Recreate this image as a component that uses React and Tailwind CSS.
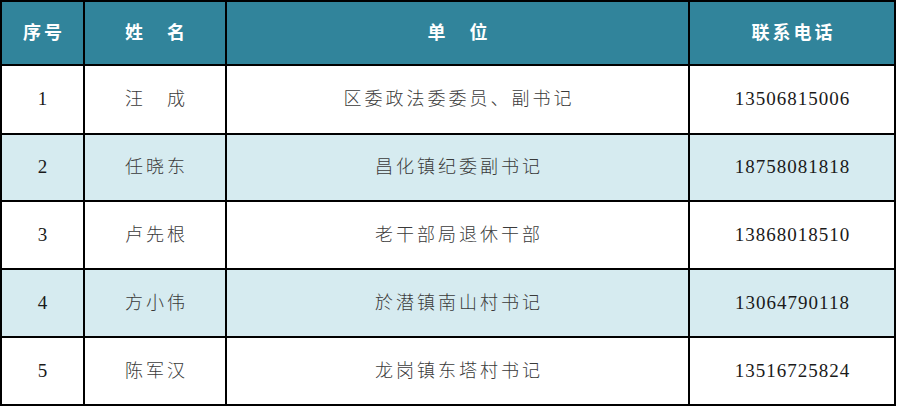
import React from "react";

const rows = [
  ["1", "汪　成", "区委政法委委员、副书记", "13506815006"],
  ["2", "任晓东", "昌化镇纪委副书记", "18758081818"],
  ["3", "卢先根", "老干部局退休干部", "13868018510"],
  ["4", "方小伟", "於潜镇南山村书记", "13064790118"],
  ["5", "陈军汉", "龙岗镇东塔村书记", "13516725824"],
];

const heights = ["h-[67px]", "h-[65px]", "h-[66px]", "h-[66px]", "h-[66px]"];

export default function App() {
  const font = { fontFamily: '"Liberation Serif", "Noto Sans CJK SC", serif' };
  return (
    <div className="w-[897px] h-[407px] bg-white" style={font}>
      <div className="w-[896px] bg-black p-[2px] grid grid-cols-[81px_140px_461px_204px] gap-[2px]">
        {["序号", "姓　名", "单　位", "联系电话"].map((h, i) => (
          <div
            key={i}
            className="h-[62px] bg-[#31849b] flex items-center justify-center text-white font-bold text-[18px] tracking-[3px]"
          >
            <span className="mr-[-3px]">{h}</span>
          </div>
        ))}
        {rows.map((r, ri) =>
          r.map((c, ci) => (
            <div
              key={ri + "-" + ci}
              className={`${heights[ri]} ${ri % 2 === 1 ? "bg-[#d6ebf0]" : "bg-white"} flex items-center justify-center ${
                ci === 0 || ci === 3 ? "text-[19px] tracking-[1px] text-[#1a1a1a]" : "text-[18px] tracking-[3px] font-light text-[#3a3a3a]"
              }`}
            >
              <span className={ci === 0 || ci === 3 ? "mr-[-1px]" : "mr-[-3px]"}>{c}</span>
            </div>
          ))
        )}
      </div>
    </div>
  );
}
